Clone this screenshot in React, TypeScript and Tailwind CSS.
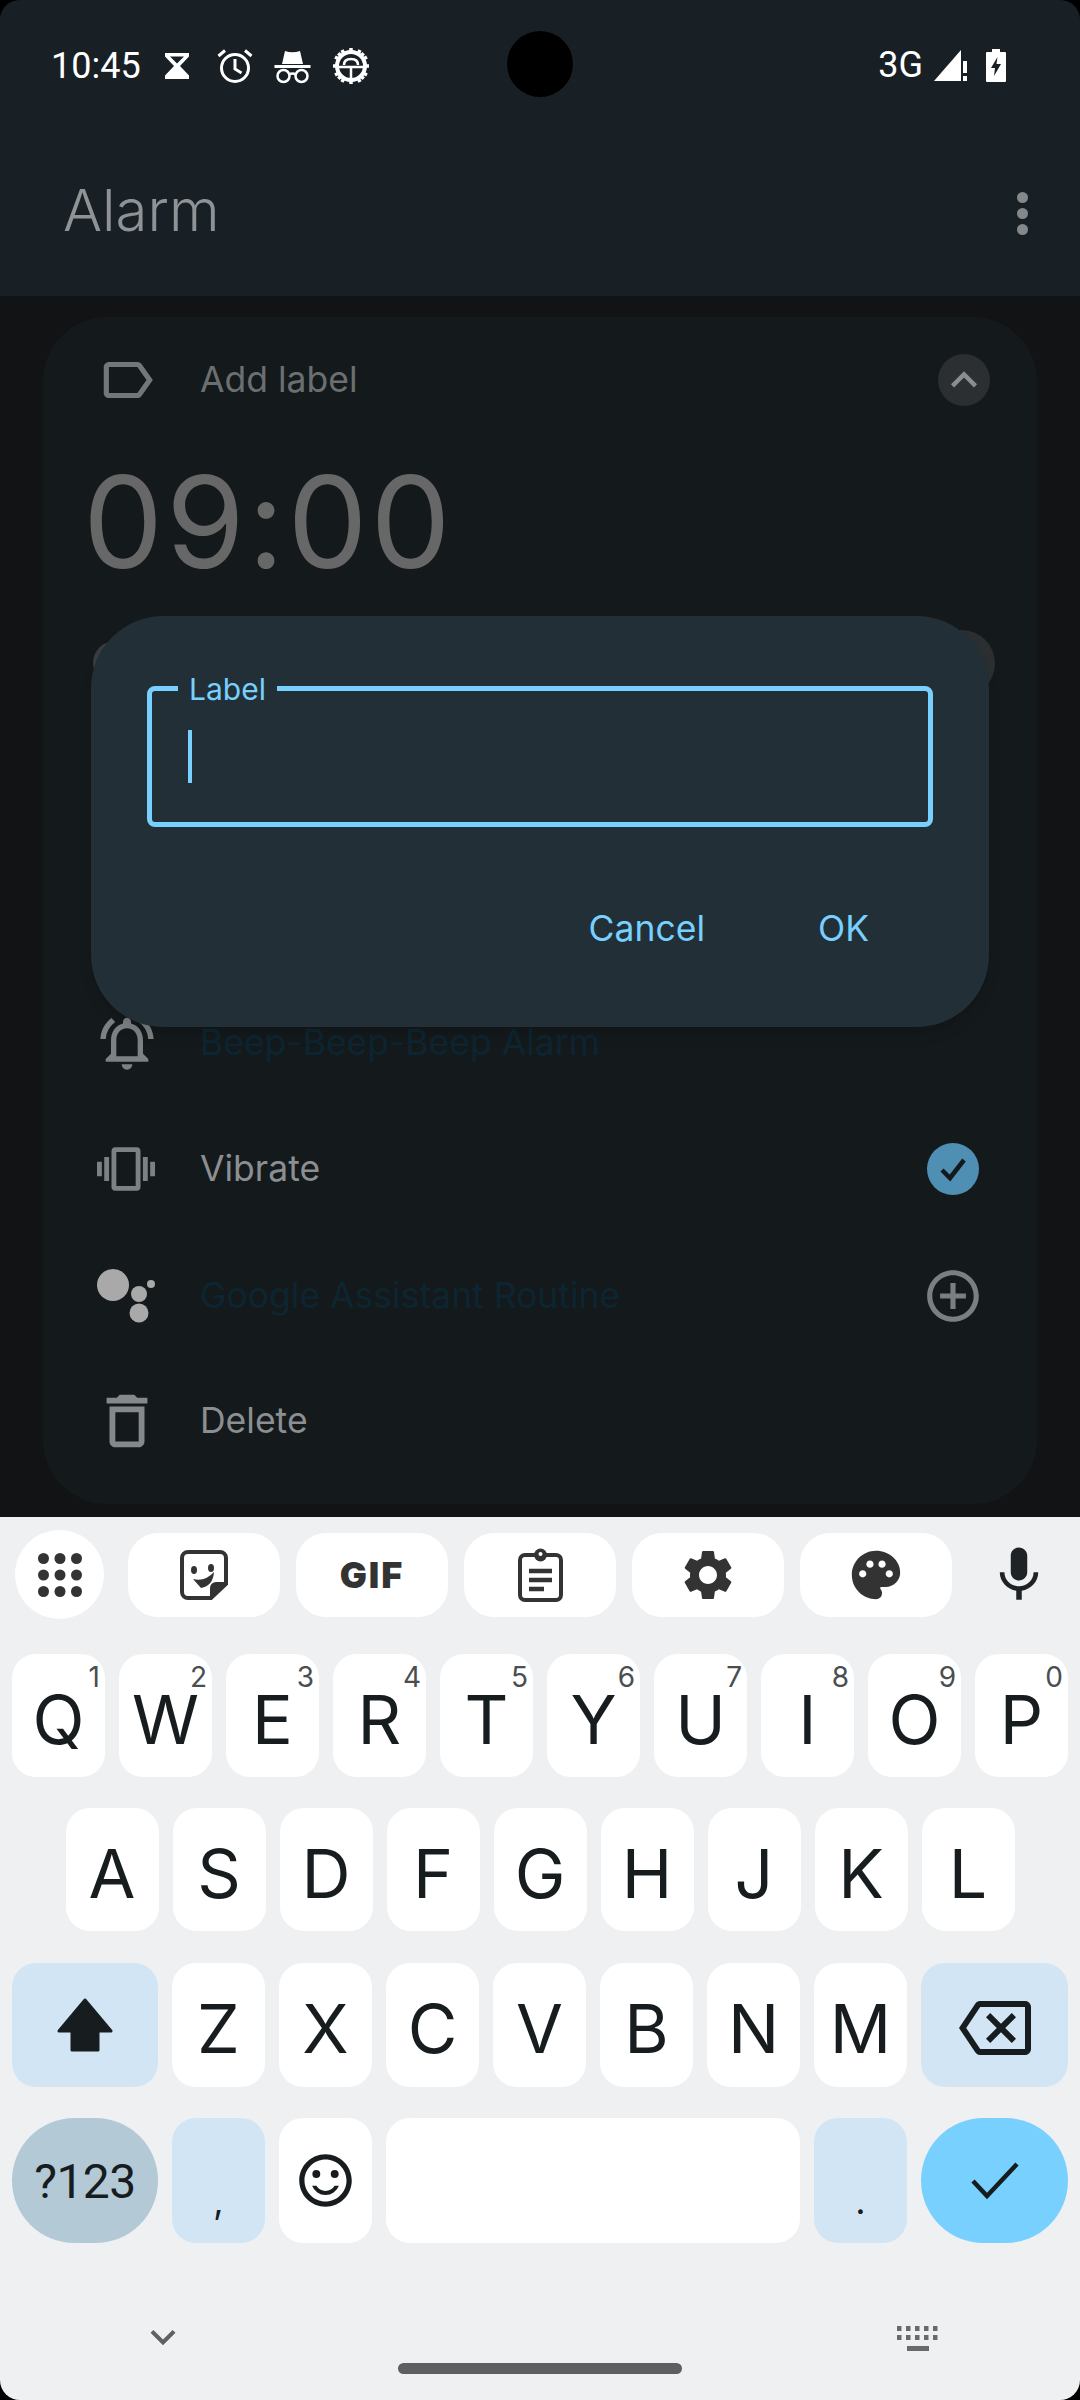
import React from 'react';
import {
  MdOutlineLabel,
  MdKeyboardArrowUp,
  MdOutlineNotificationsActive,
  MdOutlineVibration,
  MdDeleteOutline,
  MdAddCircleOutline,
  MdSettings,
  MdPalette,
  MdMic,
  MdOutlineBackspace,
  MdOutlineSentimentSatisfied,
  MdKeyboardArrowDown,
} from 'react-icons/md';

const sans = 'font-["Inter",sans-serif]';

const StatusIcons = () => (
  <div className="flex items-center">
    {/* hourglass */}
    <svg width="26" height="26" viewBox="0 0 26 26" className="ml-[23px]" fill="white">
      <path d="M1 0h24v3.500L16 13l9 9.500V26H1v-3.500L10 13 1 3.500zM6 3.500 13 10.500 20 3.500z" fillRule="evenodd" />
    </svg>
    {/* alarm */}
    <svg width="38" height="36" viewBox="0 0 38 36" className="ml-[26px]" fill="none" stroke="white" strokeWidth="3">
      <circle cx="19" cy="20" r="13.500" />
      <path d="M19 11v10l6.500 4M2.500 8 9 2.500M35.500 8 29 2.500" />
    </svg>
    {/* incognito */}
    <svg width="37" height="36" viewBox="0 0 37 36" className="ml-[20px]" fill="white">
      <path d="M8 16 11 3q7 2.500 15 0l3 13z" />
      <rect x="0.500" y="17" width="36" height="3" />
      <g fill="none" stroke="white" strokeWidth="2.500">
        <circle cx="9.500" cy="28" r="6" />
        <circle cx="27.500" cy="28" r="6" />
        <path d="M15 26.500q3.500-2 7 0" />
      </g>
    </svg>
    {/* android debug gear */}
    <svg width="38" height="38" viewBox="0 0 38 38" className="ml-[21px]" fill="none" stroke="white">
      <circle cx="19" cy="19" r="14" strokeWidth="4" />
      <path
        strokeWidth="3.500"
        d="M19 1v5M19 32v5M1 19h5M32 19h5M6.300 6.300l3.500 3.500M28.200 28.200l3.500 3.500M6.300 31.700l3.500-3.500M28.200 9.800l3.500-3.500M10 3l2 4M26 31l2 4M3 10l4 2M31 26l4 2M3 28l4-2M31 12l4-2M10 35l2-4M26 7l2-4"
      />
      <path strokeWidth="2.500" d="M7 20h24M19 20v12M12 18q0-6 7-6t7 6" />
    </svg>
  </div>
);

const SystemRight = () => (
  <div className="flex items-center">
    <span className='font-["Roboto",sans-serif] text-[36px] leading-none text-white'>3G</span>
    <svg width="33" height="32" viewBox="0 0 33 32" className="ml-[11px]" fill="white">
      <path d="M0 32 27 1v31z" />
      <path d="M29 12h4v12h-4zM29 27h4v5h-4z" />
    </svg>
    <svg width="20" height="33" viewBox="0 0 20 33" className="ml-[19px] mr-[74px]">
      <path fill="white" d="M6 0h8v3h5a1 1 0 0 1 1 1v28a1 1 0 0 1-1 1H1a1 1 0 0 1-1-1V4a1 1 0 0 1 1-1h5z" />
      <path fill="#182025" d="M11.500 8 5 19h4l-1 8 7-12h-4.500z" />
    </svg>
  </div>
);

const AlarmRow = ({
  icon,
  text,
  textColor,
  right,
  className,
}: {
  icon: React.ReactNode;
  text: string;
  textColor: string;
  right?: React.ReactNode;
  className: string;
}) => (
  <div className={`flex h-[80px] items-center ${className}`}>
    <div className="flex w-[157px] shrink-0 items-center justify-center pl-[24px] pr-[14px]">{icon}</div>
    <span className={`${sans} text-[35.500px] leading-none ${textColor}`}>{text}</span>
    {right && <div className="ml-auto mr-[58px] flex">{right}</div>}
  </div>
);

const CardBehind = () => (
  <div className="mx-[43px] mt-[21px] h-[1187px] rounded-[64px] bg-[#14191c] pt-[23px]">
    <AlarmRow
      className=""
      icon={<MdOutlineLabel size={62} color="#73767a" />}
      text="Add label"
      textColor="text-[#6c6f71]"
      right={
        <div className="-mr-[11px] flex h-[52px] w-[52px] items-center justify-center rounded-full bg-[#2b2f31]">
          <MdKeyboardArrowUp size={52} color="#8b8e90" />
        </div>
      }
    />
    <div className={`${sans} mt-[37px] h-[130px] pl-[40px] text-[127px] font-normal leading-[130px] tracking-[3px] text-[#676767]`}>
      09:00
    </div>
    {/* switch row, mostly hidden by the dialog */}
    <div className="mt-[41px] flex h-[70px] items-center justify-between pl-[50px] pr-[42px]">
      <div className="h-[44px] w-[44px] rounded-full bg-[#3a3d3f]" />
      <div className="h-[67px] w-[67px] rounded-full bg-[#2c2f31]" />
    </div>
    <AlarmRow
      className="mt-[305px]"
      icon={<MdOutlineNotificationsActive size={64} color="#7d8184" />}
      text="Beep-Beep-Beep Alarm"
      textColor="text-[#0d2531]"
    />
    <AlarmRow
      className="mt-[46px]"
      icon={<MdOutlineVibration size={58} color="#7d8184" className="-ml-[2px]" />}
      text="Vibrate"
      textColor="text-[#8c8f91]"
      right={
        <svg width="52" height="52" viewBox="0 0 52 52">
          <circle cx="26" cy="26" r="26" fill="#4f8fb3" />
          <path d="M15 27l8 8 14-18" fill="none" stroke="#14191c" strokeWidth="4.500" />
        </svg>
      }
    />
    <AlarmRow
      className="mt-[47px]"
      icon={
        <svg width="59" height="54" viewBox="0 0 59 54" fill="#a9a9a9">
          <circle cx="16" cy="16" r="16" />
          <circle cx="42" cy="25" r="8" />
          <circle cx="42" cy="44" r="9.500" />
          <circle cx="54" cy="15" r="4" />
        </svg>
      }
      text="Google Assistant Routine"
      textColor="text-[#0d2531]"
      right={<MdAddCircleOutline size={62} color="#7a7f82" className="-m-[5px]" />}
    />
    <AlarmRow
      className="mt-[45px]"
      icon={<MdDeleteOutline size={70} color="#85898b" />}
      text="Delete"
      textColor="text-[#8c8f91]"
    />
  </div>
);

const LabelDialog = () => (
  <div className="absolute left-[91px] top-[616px] h-[411px] w-[898px] rounded-[72px] bg-[#222f36] px-[56px] pt-[70px] shadow-lg">
    <div className="relative h-[141px] rounded-[8px] border-[5px] border-[#78d0ff]">
      <span
        className={`${sans} absolute -top-[21px] left-[26px] bg-[#222f36] px-[11px] text-[30px] leading-[38px] text-[#78d0ff]`}
      >
        Label
      </span>
      <div className="ml-[36px] mt-[39px] h-[53px] w-[4px] bg-[#78d0ff]" />
    </div>
    <div className={`${sans} mt-[84px] flex justify-end pr-[64px] text-[35.500px] leading-none text-[#78d0ff]`}>
      <span>Cancel</span>
      <span className="ml-[113px]">OK</span>
    </div>
  </div>
);

const ToolChip = ({ children }: { children: React.ReactNode }) => (
  <div className="flex h-[84px] w-[152px] items-center justify-center rounded-[30px] bg-white">{children}</div>
);

const Toolbar = () => (
  <div className="flex h-[89px] items-center pl-[15px]">
    <div className="flex h-[89px] w-[89px] items-center justify-center rounded-full bg-white">
      <svg width="44" height="44" viewBox="0 0 44 44" fill="#333">
        {[5.500, 22, 38.500].map((y) =>
          [5.500, 22, 38.500].map((x) => <circle key={`${x}-${y}`} cx={x} cy={y} r="5.500" />),
        )}
      </svg>
    </div>
    <div className="ml-[24px] flex gap-[16px]">
      <ToolChip>
        <svg width="48" height="50" viewBox="0 0 48 50" fill="none">
          <path d="M8 2h32a6 6 0 0 1 6 6v26L31 48H8a6 6 0 0 1-6-6V8a6 6 0 0 1 6-6z" stroke="#333" strokeWidth="4" />
          <path d="M46 32H36a6 6 0 0 0-6 6v10z" fill="#333" />
          <ellipse cx="14" cy="20" rx="3" ry="4" fill="#333" />
          <ellipse cx="31" cy="18" rx="3" ry="4" fill="#333" />
          <path d="M13 29q12 3 21-7-1 14-13 16z" fill="#333" />
        </svg>
      </ToolChip>
      <ToolChip>
        <span className={`${sans} text-[36px] font-black leading-none tracking-[2px] text-[#333]`}>GIF</span>
      </ToolChip>
      <ToolChip>
        {/* clipboard */}
        <svg width="45" height="54" viewBox="0 0 45 54" fill="none">
          <rect x="2" y="7" width="41" height="45" rx="5" stroke="#333" strokeWidth="4" />
          <circle cx="22.500" cy="7" r="6.500" fill="#333" />
          <circle cx="22.500" cy="6" r="2" fill="white" />
          <path d="M11 23h23M11 32h23M11 41h15" stroke="#333" strokeWidth="4.500" />
        </svg>
      </ToolChip>
      <ToolChip>
        <MdSettings size={60} color="#333" />
      </ToolChip>
      <ToolChip>
        <MdPalette size={58} color="#333" />
      </ToolChip>
    </div>
    <MdMic size={66} color="#1f2326" className="ml-[34px]" />
  </div>
);

const LetterKey = ({ letter, hint }: { letter: string; hint?: string }) => (
  <div className="relative flex h-full w-[93px] items-center justify-center rounded-[24px] bg-white pt-[6px]">
    <span className={`${sans} text-[68px] leading-none text-[#171c1f]`}>{letter}</span>
    {hint && (
      <span className={`${sans} absolute right-[5px] top-[9px] text-[28px] leading-none text-[#4a4e50]`}>{hint}</span>
    )}
  </div>
);

const Keyboard = () => (
  <div className="mt-[13px] flex flex-1 flex-col bg-[#eff0f2] pt-[13px]">
    <Toolbar />
    <div className="mt-[35px] flex h-[123px] justify-center gap-[14px]">
      {'QWERTYUIOP'.split('').map((k, i) => (
        <LetterKey key={k} letter={k} hint={String((i + 1) % 10)} />
      ))}
    </div>
    <div className="mt-[31px] flex h-[123px] justify-center gap-[14px]">
      {'ASDFGHJKL'.split('').map((k) => (
        <LetterKey key={k} letter={k} />
      ))}
    </div>
    <div className="mt-[32px] flex h-[124px] justify-center gap-[14px]">
      <div className="flex w-[146px] items-center justify-center rounded-[24px] bg-[#d2e5f4]">
        <svg width="56" height="54" viewBox="0 0 56 54" fill="#171c1f" stroke="#171c1f" strokeWidth="3" strokeLinejoin="round">
          <path d="M28 2 54 33H41v19H15V33H2z" />
        </svg>
      </div>
      {'ZXCVBNM'.split('').map((k) => (
        <LetterKey key={k} letter={k} />
      ))}
      <div className="flex w-[147px] items-center justify-center rounded-[24px] bg-[#d2e5f4] pt-[5px]">
        <MdOutlineBackspace size={72} color="#171c1f" />
      </div>
    </div>
    <div className="mt-[31px] flex h-[125px] justify-center gap-[14px]">
      <div className='flex w-[146px] items-center justify-center rounded-full bg-[#b3c9d6] pt-[2px] font-["Roboto",sans-serif] text-[48px] leading-none tracking-[-0.5px] text-[#171c1f]'>
        ?123
      </div>
      <div className={`${sans} flex w-[93px] items-end justify-center rounded-[24px] bg-[#d2e5f4] pb-[24px] text-[36px] leading-none text-[#171c1f]`}>
        ,
      </div>
      <div className="flex w-[93px] items-center justify-center rounded-[24px] bg-white">
        <MdOutlineSentimentSatisfied size={63} color="#171c1f" />
      </div>
      <div className="w-[414px] rounded-[24px] bg-white" />
      <div className={`${sans} flex w-[93px] items-end justify-center rounded-[24px] bg-[#d2e5f4] pb-[24px] text-[36px] leading-none text-[#171c1f]`}>
        .
      </div>
      <div className="flex w-[147px] items-center justify-center rounded-full bg-[#78d0ff]">
        <svg width="48" height="38" viewBox="0 0 48 38" fill="none" stroke="#171c1f" strokeWidth="4.500">
          <path d="M2 19l14 15L46 2" />
        </svg>
      </div>
    </div>
    {/* nav area */}
    <div className="relative flex-1">
      <MdKeyboardArrowDown size={50} color="#5f6163" className="absolute left-[138px] top-[69px]" />
      <svg width="42" height="26" viewBox="0 0 42 26" fill="#6a6a6a" className="absolute left-[897px] top-[83px]">
        {[0, 9, 18, 27, 36].map((x) => (
          <React.Fragment key={x}>
            <rect x={x} y="0" width="4.500" height="5" />
            <rect x={x} y="9" width="4.500" height="5" />
          </React.Fragment>
        ))}
        <rect x="10" y="20" width="22" height="5" />
      </svg>
      <div className="absolute left-[398px] top-[120px] h-[11px] w-[284px] rounded-full bg-[#5f5f5f]" />
    </div>
  </div>
);

export default function App() {
  return (
    <div className="h-[2400px] w-[1080px] bg-black">
      <div className="relative flex h-full w-full flex-col overflow-hidden rounded-[20px] bg-[#111315]">
        <div className="h-[296px] shrink-0 bg-[#182025]">
          <div className="relative flex h-[130px] items-start justify-between pl-[51px] pt-[47px]">
            <div className="flex items-center">
              <span className='font-["Roboto",sans-serif] text-[36px] leading-none text-white'>10:45</span>
              <StatusIcons />
            </div>
            <SystemRight />
            <div className="absolute left-[507px] top-[31px] h-[66px] w-[66px] rounded-full bg-black" />
          </div>
          <div className="flex items-center justify-between pl-[63px] pr-[52px] pt-[48px]">
            <span className={`${sans} text-[58px] font-light leading-[64px] text-[#909396]`}>Alarm</span>
            <div className="mt-[6px] flex flex-col gap-[5px]">
              <div className="h-[11px] w-[11px] rounded-full bg-[#85888a]" />
              <div className="h-[11px] w-[11px] rounded-full bg-[#85888a]" />
              <div className="h-[11px] w-[11px] rounded-full bg-[#85888a]" />
            </div>
          </div>
        </div>
        <CardBehind />
        <Keyboard />
        <LabelDialog />
      </div>
    </div>
  );
}
